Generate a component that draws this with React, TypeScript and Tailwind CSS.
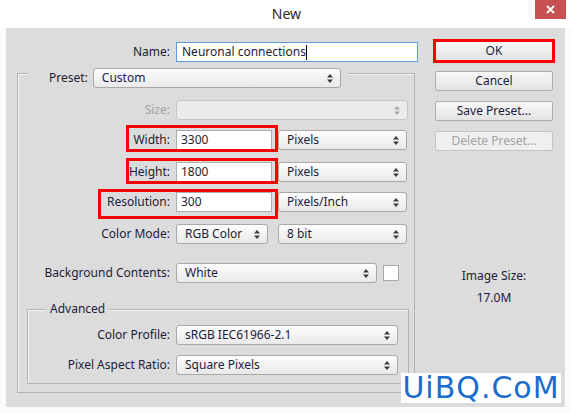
import React from "react";

const font = { fontFamily: '"Noto Sans", "Liberation Sans", sans-serif' };

function Arrows({ disabled = false }: { disabled?: boolean }) {
  const c = disabled ? "#a8a8a8" : "#3a3a3a";
  return (
    <svg width="6" height="9" viewBox="0 0 6 9" className="shrink-0">
      <path d="M3 0 L6 3.5 L0 3.5 Z" fill={c} />
      <path d="M0 5.5 L6 5.5 L3 9 Z" fill={c} />
    </svg>
  );
}

function Select({
  value,
  w,
  disabled = false,
}: {
  value?: string;
  w: string;
  disabled?: boolean;
}) {
  return (
    <div
      className={`${w} h-[20px] flex items-center justify-between pl-[8px] pr-[7px] rounded-[3px] border ${
        disabled
          ? "border-[#c6c6c6] bg-[#ebebeb]"
          : "border-[#a9a9a9] bg-gradient-to-b from-[#fdfdfd] to-[#e9e9e9]"
      }`}
    >
      <span className="text-[12px] leading-none text-[#1c1c38]">{value}</span>
      <Arrows disabled={disabled} />
    </div>
  );
}

function Input({ value, w }: { value: string; w: string }) {
  return (
    <div className={`${w} h-[20px] flex items-center pl-[4px] bg-white border border-[#abadb3]`}>
      <span className="text-[12px] leading-none text-[#1c1c38]">{value}</span>
    </div>
  );
}

function Row({
  label,
  lw,
  children,
  className = "",
  muted = false,
}: {
  label: string;
  lw: string;
  children: React.ReactNode;
  className?: string;
  muted?: boolean;
}) {
  return (
    <div className={`flex items-center gap-[6px] h-[20px] ${className}`}>
      <div
        className={`${lw} shrink-0 text-right text-[12px] leading-none ${
          muted ? "text-[#a3a3a3]" : "text-[#1c1c38]"
        }`}
      >
        {label}
      </div>
      {children}
    </div>
  );
}

function Button({ label, disabled = false, h = "h-[20px]" }: { label: string; disabled?: boolean; h?: string }) {
  return (
    <div
      className={`${h} w-[118px] flex items-center justify-center rounded-[2px] border text-[12px] leading-none ${
        disabled
          ? "border-[#c4c4c4] bg-[#efefef] text-[#a3a3a3]"
          : "border-[#acacac] bg-gradient-to-b from-[#f8f8f8] to-[#e3e3e3] text-[#1c1c38]"
      }`}
    >
      {label}
    </div>
  );
}

export default function App() {
  return (
    <div className="w-[571px] h-[413px] bg-[#fbfbfb] overflow-hidden select-none" style={font}>
      {/* title bar */}
      <div className="relative h-[28px] bg-white flex items-center justify-center">
        <span className="text-[14px] text-[#2b2b2b] leading-none ml-[2px]">New</span>
        <div className="absolute top-0 right-[5px] w-[31px] h-[19px] bg-[#c75050] flex items-center justify-center">
          <svg width="9" height="9" viewBox="0 0 9 9">
            <path d="M1 1 L8 8 M8 1 L1 8" stroke="#fff" strokeWidth="1.8" />
          </svg>
        </div>
      </div>

      {/* dialog body */}
      <div className="relative mx-[6px] h-[379px] bg-[#dcdcdc] flex pt-[14px]">
        {/* left column */}
        <div className="w-[414px] shrink-0">
          <Row label="Name:" lw="w-[164px]">
            <div className="w-[242px] h-[20px] flex items-center pl-[5px] bg-white border border-[#5b9de0]">
              <span className="text-[12px] leading-none text-[#1c1c38]">Neuronal connections</span>
              <span className="w-px h-[15px] bg-black" />
            </div>
          </Row>

          {/* preset group */}
          <div className="mt-[11px] ml-[11px] w-[398px] h-[320px] border border-[#b2b2b2] shadow-[inset_1px_1px_0_#f4f4f4]">
            <div className="-mt-[6px] flex items-center h-[20px]">
              <div className="ml-[10px] pl-[21px] pr-[5px] bg-[#dcdcdc] text-[12px] leading-none text-[#1c1c38]">
                Preset:
              </div>
              <div className="bg-[#dcdcdc] pr-[7px]">
                <Select value="Custom" w="w-[248px]" />
              </div>
            </div>

            <Row label="Size:" lw="w-[152px]" className="mt-[12px]" muted>
              <Select w="w-[232px]" disabled />
            </Row>
            <Row label="Width:" lw="w-[152px]" className="mt-[10px]">
              <Input value="3300" w="w-[96px]" />
              <Select value="Pixels" w="w-[129px]" />
            </Row>
            <Row label="Height:" lw="w-[152px]" className="mt-[12px]">
              <Input value="1800" w="w-[96px]" />
              <Select value="Pixels" w="w-[129px]" />
            </Row>
            <Row label="Resolution:" lw="w-[152px]" className="mt-[10px]">
              <Input value="300" w="w-[96px]" />
              <Select value="Pixels/Inch" w="w-[129px]" />
            </Row>
            <Row label="Color Mode:" lw="w-[152px]" className="mt-[12px]">
              <Select value="RGB Color" w="w-[92px]" />
              <div className="ml-[4px]">
                <Select value="8 bit" w="w-[129px]" />
              </div>
            </Row>
            <Row label="Background Contents:" lw="w-[152px]" className="mt-[19px]">
              <Select value="White" w="w-[201px]" />
              <div className="w-[16px] h-[16px] bg-white border border-[#a9a9a9]" />
            </Row>

            {/* advanced group */}
            <div className="mt-[26px] ml-[9px] w-[382px] h-[75px] border border-[#b2b2b2] shadow-[inset_1px_1px_0_#f4f4f4]">
              <div className="-mt-[9px] h-[16px] flex items-center">
                <div className="ml-[18px] px-[4px] bg-[#dcdcdc] text-[12px] leading-none text-[#1c1c38]">
                  Advanced
                </div>
              </div>
              <Row label="Color Profile:" lw="w-[142px]" className="mt-[8px]">
                <Select value="sRGB IEC61966-2.1" w="w-[222px]" />
              </Row>
              <Row label="Pixel Aspect Ratio:" lw="w-[142px]" className="mt-[10px]">
                <Select value="Square Pixels" w="w-[222px]" />
              </Row>
            </div>
          </div>
        </div>

        {/* right column */}
        <div className="ml-[13px] w-[122px] flex flex-col -mt-[3px]">
          <div className="w-[122px] h-[24px] border-[3px] border-[#ff0000] flex">
            <div className="h-[18px] w-[116px] flex items-center justify-center bg-gradient-to-b from-[#f8f8f8] to-[#e3e3e3] text-[12px] leading-none text-[#1c1c38]">
              OK
            </div>
          </div>
          <div className="mt-[8px] ml-[2px] flex flex-col gap-[10px]">
            <Button label="Cancel" />
            <Button label="Save Preset..." />
            <Button label="Delete Preset..." disabled />
          </div>
          <div className="mt-[117px] text-center text-[12px] leading-[16px] text-[#1c1c38]">Image Size:</div>
          <div className="mt-[6px] text-center text-[12px] leading-[16px] text-[#1c1c38]">17.0M</div>
        </div>

        {/* red annotation frames */}
        <div className="absolute left-[120px] top-[97px] w-[152px] h-[27px] border-[3px] border-[#ff0000]" />
        <div className="absolute left-[120px] top-[130px] w-[152px] h-[26px] border-[3px] border-[#ff0000]" />
        <div className="absolute left-[92px] top-[161px] w-[180px] h-[30px] border-[3px] border-[#ff0000]" />

        {/* watermark */}
        <div className="absolute left-[395px] top-[345px] w-[160px] h-[30px] bg-white flex items-center justify-center">
          <span
            className="text-[30px] leading-none tracking-[1px] text-[#1a6dcc]"
            style={{ fontFamily: '"DejaVu Sans", sans-serif' }}
          >
            UiBQ.CoM
          </span>
        </div>
      </div>
    </div>
  );
}
